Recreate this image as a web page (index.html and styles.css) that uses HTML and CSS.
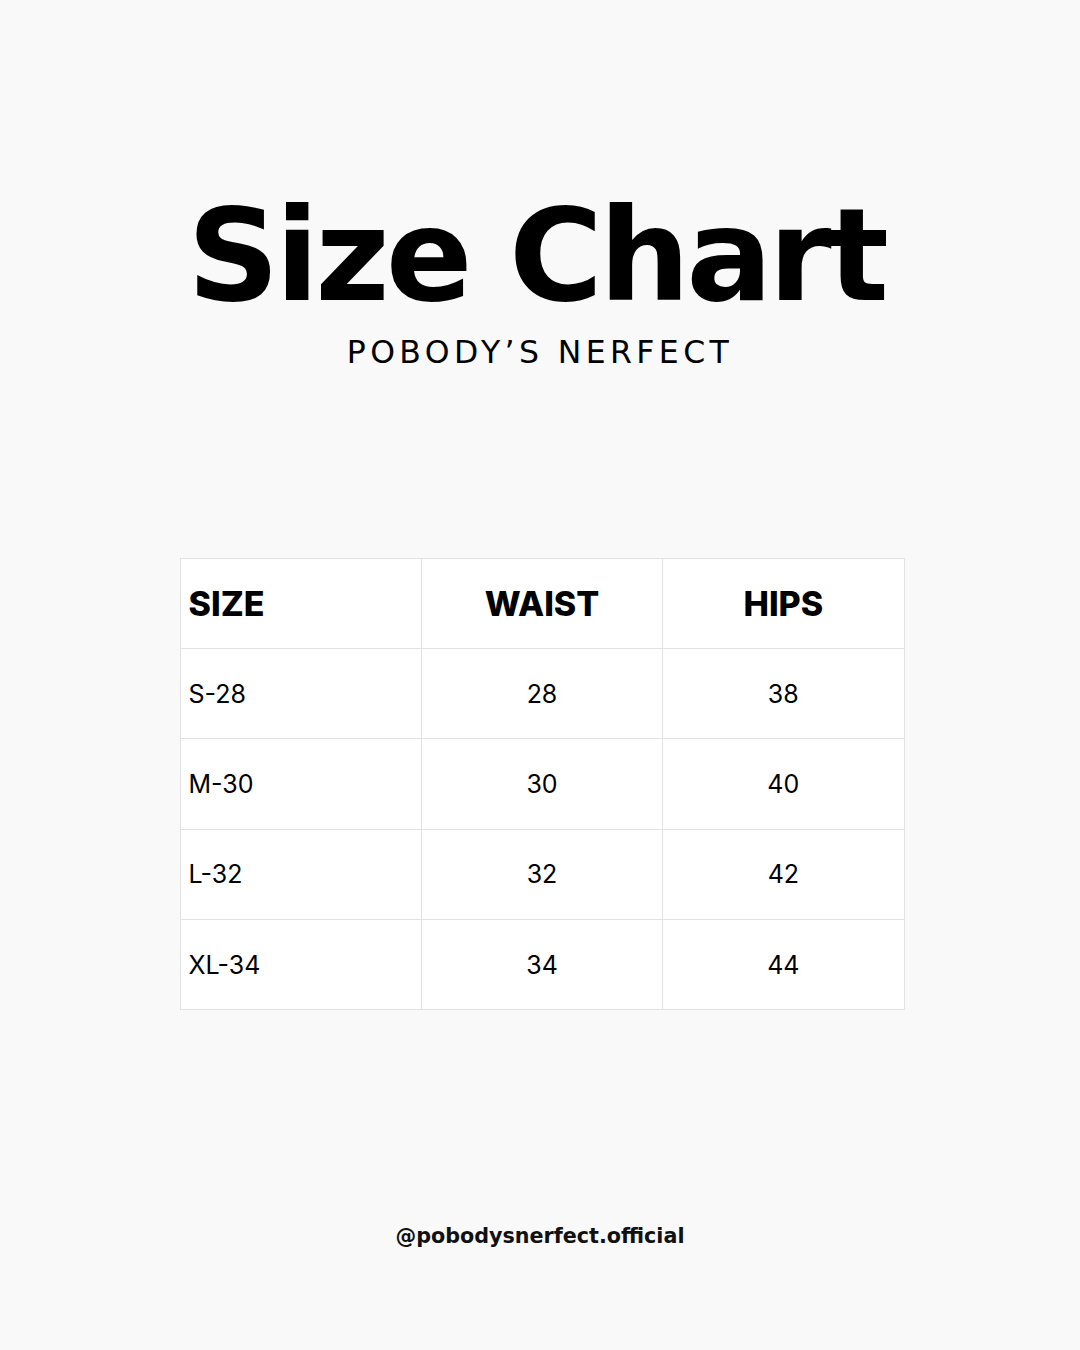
FILE: index.html
```html
<!DOCTYPE html>
<html lang="en">
<head>
<meta charset="utf-8">
<title>Size Chart</title>
<link rel="stylesheet" href="styles.css">
</head>
<body>
<main class="page">
  <header class="heading">
    <h1 class="title">Size Chart</h1>
    <p class="subtitle">POBODY’S NERFECT</p>
  </header>
  <table class="chart">
    <thead>
      <tr><th class="first">SIZE</th><th>WAIST</th><th>HIPS</th></tr>
    </thead>
    <tbody>
      <tr><td class="first">S-28</td><td>28</td><td>38</td></tr>
      <tr><td class="first">M-30</td><td>30</td><td>40</td></tr>
      <tr><td class="first">L-32</td><td>32</td><td>42</td></tr>
      <tr><td class="first">XL-34</td><td>34</td><td>44</td></tr>
    </tbody>
  </table>
  <p class="handle">@pobodysnerfect.official</p>
</main>
</body>
</html>
```
FILE: styles.css
```css
html, body {
  margin: 0;
  padding: 0;
  background: #f9f9f9;
}
.page {
  width: 1080px;
  height: 1350px;
  display: flex;
  flex-direction: column;
  align-items: center;
  box-sizing: border-box;
  padding-top: 192px;
  color: #000;
}
.heading {
  display: flex;
  flex-direction: column;
  align-items: center;
}
.title {
  margin: 0 8px 0 0;
  font-family: "DejaVu Sans", sans-serif;
  font-weight: 700;
  font-size: 128px;
  line-height: 128px;
  letter-spacing: -4px;
}
.subtitle {
  margin: 17px 0 0 0;
  font-family: "DejaVu Sans", sans-serif;
  font-weight: 400;
  font-size: 31.5px;
  line-height: 31.5px;
  letter-spacing: 4.4px;
}
.chart {
  margin-top: 189px;
  margin-left: 4px;
  width: 725px;
  border-collapse: collapse;
  background: #ffffff;
  table-layout: fixed;
}
.chart th, .chart td {
  border: 1px solid #e2e2e2;
  height: 89.4px;
  padding: 0 8px;
  text-align: center;
  vertical-align: middle;
  font-family: Inter, sans-serif;
  color: #000;
}
.chart th {
  font-weight: 800;
  font-size: 34px;
}
.chart td {
  font-weight: 400;
  font-size: 25px;
}
.chart .first {
  text-align: left;
}
.handle {
  margin: 216px 0 0 0;
  font-family: "DejaVu Sans", sans-serif;
  font-weight: 700;
  font-size: 20.7px;
  line-height: 20px;
  color: #111;
}
```
